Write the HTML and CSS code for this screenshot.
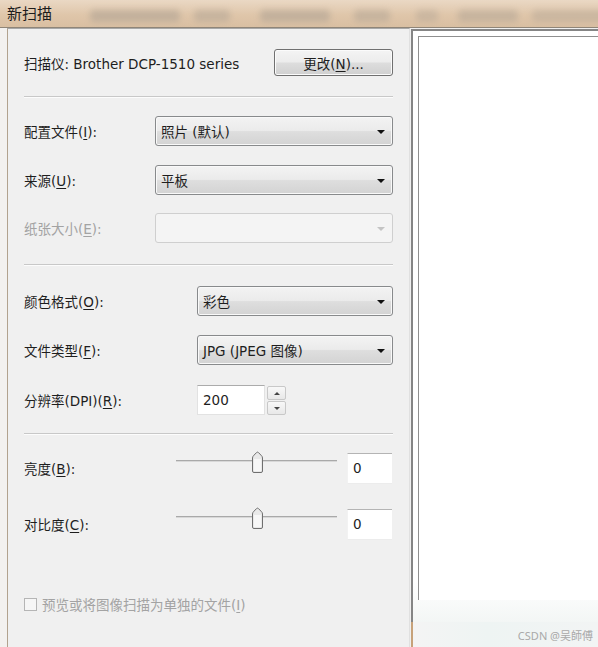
FILE: index.html
```html
<!DOCTYPE html>
<html lang="zh-CN">
<head>
<meta charset="utf-8">
<title>新扫描</title>
<link rel="stylesheet" href="styles.css">
</head>
<body>
<div class="titlebar">
  <span class="title">新扫描</span>
  <div class="blobs">
    <span class="blob b1"></span>
    <span class="blob b2"></span>
    <span class="blob b3"></span>
    <span class="blob b4"></span>
    <span class="blob b5"></span>
    <span class="blob b6"></span>
    <span class="blob b7"></span>
  </div>
</div>
<div class="main">
  <div class="edge"></div>
  <div class="panel">
    <div class="scanner-row">
      <span class="label">扫描仪: Brother DCP-1510 series</span>
      <button class="btn">更改(<u>N</u>)...</button>
    </div>
    <div class="sep"></div>

    <div class="field r2 wide">
      <span class="label">配置文件(<u>I</u>):</span>
      <div class="combo"><span>照片 (默认)</span><span class="arrow"></span></div>
    </div>
    <div class="field r3 wide">
      <span class="label">来源(<u>U</u>):</span>
      <div class="combo"><span>平板</span><span class="arrow"></span></div>
    </div>
    <div class="field r4 wide">
      <span class="label disabled">纸张大小(<u>E</u>):</span>
      <div class="combo off"><span></span><span class="arrow"></span></div>
    </div>
    <div class="sep s2"></div>

    <div class="field r5 narrow">
      <span class="label">颜色格式(<u>O</u>):</span>
      <div class="combo"><span>彩色</span><span class="arrow"></span></div>
    </div>
    <div class="field r6 narrow">
      <span class="label">文件类型(<u>F</u>):</span>
      <div class="combo"><span>JPG (JPEG 图像)</span><span class="arrow"></span></div>
    </div>
    <div class="field r7 narrow">
      <span class="label">分辨率(DPI)(<u>R</u>):</span>
      <div class="spin">
        <div class="spin-field">200</div>
        <div class="spin-btns">
          <span class="sb"><span class="up"></span></span>
          <span class="sb"><span class="down"></span></span>
        </div>
      </div>
    </div>
    <div class="sep s3"></div>

    <div class="slide-row r8">
      <span class="label">亮度(<u>B</u>):</span>
      <div class="slider"><span class="track"></span>
        <svg class="thumb" width="13" height="23" viewBox="0 0 13 23"><path d="M1.5 7 Q1.5 5.5 3 4.2 L5.5 1.6 Q6.5 0.6 7.5 1.6 L10 4.2 Q11.5 5.5 11.5 7 L11.5 20 Q11.5 21.5 10 21.5 L3 21.5 Q1.5 21.5 1.5 20 Z" fill="#e9e9e9" stroke="#6f6f6f" stroke-width="1"/><path d="M3 8 L10 8 L10 20 L3 20 Z" fill="#f7f7f7"/></svg>
      </div>
      <div class="val">0</div>
    </div>
    <div class="slide-row r9">
      <span class="label">对比度(<u>C</u>):</span>
      <div class="slider"><span class="track"></span>
        <svg class="thumb" width="13" height="23" viewBox="0 0 13 23"><path d="M1.5 7 Q1.5 5.5 3 4.2 L5.5 1.6 Q6.5 0.6 7.5 1.6 L10 4.2 Q11.5 5.5 11.5 7 L11.5 20 Q11.5 21.5 10 21.5 L3 21.5 Q1.5 21.5 1.5 20 Z" fill="#e9e9e9" stroke="#6f6f6f" stroke-width="1"/><path d="M3 8 L10 8 L10 20 L3 20 Z" fill="#f7f7f7"/></svg>
      </div>
      <div class="val">0</div>
    </div>

    <div class="check-row">
      <span class="box"></span>
      <span class="label disabled">预览或将图像扫描为单独的文件(<u>I</u>)</span>
    </div>
  </div>
  <div class="right">
    <div class="preview">
      <div class="inner"></div>
    </div>
    <div class="below"></div>
  </div>
</div>
<div class="watermark">CSDN @吴師傅</div>
</body>
</html>
```

FILE: styles.css
```css
html, body {
  margin: 0;
  padding: 0;
}
body {
  width: 598px;
  height: 647px;
  overflow: hidden;
  background: #f0f0f0;
  font-family: "DejaVu Sans", "Noto Sans CJK SC", sans-serif;
  font-size: 13.5px;
  color: #1e1e1e;
  position: relative;
}
.titlebar {
  height: 27px;
  border-bottom: 1px solid #8f8578;
  background: linear-gradient(to bottom, #ead8c4 0%, #dfc6aa 55%, #d9bfa2 100%);
  display: flex;
  align-items: center;
  overflow: hidden;
}
.title {
  padding-left: 7px;
  font-family: "Noto Sans CJK SC", sans-serif;
  font-size: 15px;
  color: #1c1c1c;
  margin-top: -3px;
  width: 83px;
  flex: none;
}
.blobs {
  display: flex;
  align-items: center;
  height: 14px;
  margin-top: 4px;
}
.blob {
  height: 12px;
  background: #b7a897;
  filter: blur(3px);
  border-radius: 4px;
  flex: none;
}
.b1 { width: 90px; opacity: .7; }
.b2 { width: 36px; margin-left: 14px; opacity: .6; }
.b3 { width: 70px; margin-left: 30px; opacity: .7; }
.b4 { width: 36px; margin-left: 24px; opacity: .6; }
.b5 { width: 22px; margin-left: 26px; opacity: .5; }
.b6 { width: 60px; margin-left: 20px; opacity: .6; }
.b7 { width: 90px; margin-left: 14px; opacity: .5; }

.main {
  display: flex;
  height: 619px;
}
.edge {
  width: 7px;
  flex: none;
  background: #f3f1ef;
}
.panel {
  width: 369px;
  flex: none;
  border-left: 1px solid #b2a28e;
  border-right: 1px solid #e0e0e0;
  border-top: 1px solid #a8a8a8;
  padding: 0 16px;
  display: flex;
  flex-direction: column;
  background: #f0f0f0;
}
.label {
  white-space: nowrap;
  flex: none;
}
.label u {
  text-decoration-thickness: 1px;
  text-underline-offset: 2px;
}
.disabled {
  color: #a3a3a3;
}
.scanner-row {
  margin-top: 20px;
  height: 27px;
  display: flex;
  align-items: center;
  justify-content: space-between;
}
.btn {
  width: 119px;
  height: 27px;
  border: 1px solid #707070;
  border-radius: 3px;
  background: linear-gradient(to bottom, #f4f4f4 0%, #ececec 48%, #dddddd 52%, #d0d0d0 100%);
  box-shadow: inset 0 0 0 1px #fbfbfb;
  font-family: "DejaVu Sans", "Noto Sans CJK SC", sans-serif;
  font-size: 13.5px;
  color: #1e1e1e;
  padding: 0;
}
.btn u {
  text-underline-offset: 2px;
}
.sep {
  margin-top: 20px;
  height: 1px;
  background: #c8c8c8;
  box-shadow: 0 1px 0 #fcfcfc;
  flex: none;
}
.s2 { margin-top: 21px; }
.s3 { margin-top: 18px; }

.field {
  display: flex;
  align-items: center;
  height: 30px;
  flex: none;
}
.wide .label { width: 131px; }
.narrow .label { width: 173px; }
.r2 { margin-top: 19px; }
.r3 { margin-top: 19px; }
.r4 { margin-top: 18px; }
.r5 { margin-top: 21px; }
.r6 { margin-top: 19px; }
.r7 { margin-top: 20px; }

.combo {
  flex: 1;
  height: 28px;
  border: 1px solid #888a8c;
  border-radius: 3px;
  background: linear-gradient(to bottom, #f3f3f3 0%, #ebebeb 48%, #dedede 52%, #d3d3d3 100%);
  box-shadow: inset 0 0 0 1px #f9f9f9;
  display: flex;
  align-items: center;
  justify-content: space-between;
  padding: 0 7px 0 5px;
  white-space: nowrap;
}
.arrow {
  width: 0;
  height: 0;
  border-left: 4px solid transparent;
  border-right: 4px solid transparent;
  border-top: 4px solid #111;
  margin-top: 1px;
}
.combo.off {
  border-color: #cfcfcf;
  background: #f4f4f4;
  box-shadow: none;
}
.combo.off .arrow {
  border-top-color: #c4c4c4;
}

.spin {
  display: flex;
  height: 30px;
  gap: 2px;
}
.spin-field {
  width: 61px;
  height: 28px;
  background: #fff;
  border: 1px solid #e2e2e2;
  border-top-color: #ababab;
  padding-left: 5px;
  display: flex;
  align-items: center;
}
.spin-btns {
  width: 19px;
  display: flex;
  flex-direction: column;
  gap: 1px;
  padding-top: 1px;
}
.sb {
  flex: 1;
  border: 1px solid #c8c8c8;
  border-radius: 2px;
  background: linear-gradient(#f8f8f8, #e8e8e8);
  display: flex;
  align-items: center;
  justify-content: center;
}
.up, .down {
  width: 0;
  height: 0;
  border-left: 3px solid transparent;
  border-right: 3px solid transparent;
}
.up { border-bottom: 3px solid #444; }
.down { border-top: 3px solid #444; }

.slide-row {
  display: flex;
  align-items: center;
  height: 30px;
  flex: none;
}
.slide-row .label { width: 152px; }
.r8 { margin-top: 19px; }
.r9 { margin-top: 26px; }
.slider {
  position: relative;
  width: 161px;
  height: 23px;
  align-self: flex-start;
  margin-top: -2px;
  flex: none;
}
.track {
  position: absolute;
  left: 0;
  right: 0;
  top: 9px;
  height: 1px;
  background: #a9a9a9;
  box-shadow: 0 1px 0 #d8d8d8;
}
.thumb {
  position: absolute;
  left: 75px;
  top: 0;
}
.val {
  margin-left: 10px;
  width: 39px;
  height: 29px;
  background: #fff;
  border-top: 1px solid #b4b4b4;
  border-left: 1px solid #f2f2f2;
  border-bottom: 1px solid #ececec;
  padding-left: 5px;
  display: flex;
  align-items: center;
}

.check-row {
  margin-top: 58px;
  display: flex;
  align-items: center;
  gap: 5px;
  height: 14px;
}
.box {
  width: 11px;
  height: 11px;
  border: 1px solid #b5b5b5;
  background: #f6f6f6;
  flex: none;
}

.right {
  flex: 1;
  display: flex;
  flex-direction: column;
}
.preview {
  margin-top: 1px;
  margin-left: 1px;
  height: 586px;
  border-left: 2px solid #858585;
  border-top: 2px solid #858585;
  padding: 5px 0 0 5px;
  background: linear-gradient(to bottom, #ffffff 0%, #ffffff 93%, #f3f6f5 100%);
}
.inner {
  height: 563px;
  border-left: 1px solid #8f8f8f;
  border-top: 1px solid #8f8f8f;
  background: #fff;
}
.below {
  flex: 1;
  margin-left: 1px;
  border-left: 2px solid #c7a27a;
  background: linear-gradient(to right, #f4f4f4, #eef4f3 40%, #f2f4f4);
  height: 8px;
}
.watermark {
  position: absolute;
  right: 5px;
  bottom: 4px;
  font-family: "Noto Sans", "Noto Sans CJK SC", sans-serif;
  font-size: 11px;
  color: #a9a9a9;
}
```
